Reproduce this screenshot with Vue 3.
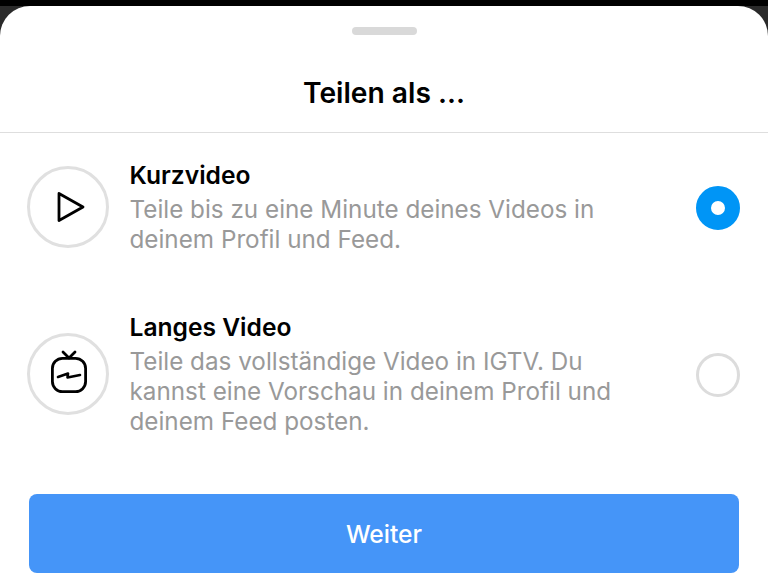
<script setup>
import { ref } from 'vue'

const selected = ref('short')

const options = [
  {
    id: 'short',
    title: 'Kurzvideo',
    lines: ['Teile bis zu eine Minute deines Videos in', 'deinem Profil und Feed.']
  },
  {
    id: 'long',
    title: 'Langes Video',
    lines: ['Teile das vollständige Video in IGTV. Du', 'kannst eine Vorschau in deinem Profil und', 'deinem Feed posten.']
  }
]
</script>

<template>
  <div class="screen">
    <div class="sheet">
      <div class="handle-row"><div class="handle"></div></div>
      <h1 class="title">Teilen als ...</h1>
      <div class="divider"></div>

      <div class="options">
        <div
          v-for="opt in options"
          :key="opt.id"
          class="option"
          :class="'option-' + opt.id"
          @click="selected = opt.id"
        >
          <div class="icon-ring">
            <svg v-if="opt.id === 'short'" class="play" width="28" height="32" viewBox="0 0 28 32">
              <path d="M2 2.5 L26 16 L2 29.5 Z" fill="none" stroke="#000" stroke-width="2.8" stroke-linejoin="round" />
            </svg>
            <svg v-else class="tv" width="40" height="45" viewBox="0 0 40 45">
              <rect x="3.4" y="8.4" width="33.2" height="33.2" rx="10" fill="none" stroke="#000" stroke-width="2.8" />
              <path d="M14 2 L20 8 L26 2" fill="none" stroke="#000" stroke-width="2.8" stroke-linejoin="round" stroke-linecap="round" />
              <path d="M9 27 L19 23.5 L18.5 27.5 L31 25" fill="none" stroke="#000" stroke-width="2.6" stroke-linecap="round" stroke-linejoin="round" />
            </svg>
          </div>
          <div class="text">
            <div class="opt-title">{{ opt.title }}</div>
            <div class="opt-desc">
              <div v-for="line in opt.lines" :key="line">{{ line }}</div>
            </div>
          </div>
          <div class="radio" :class="{ on: selected === opt.id }"></div>
        </div>
      </div>

      <button class="next">Weiter</button>
    </div>
  </div>
</template>

<style>
html, body {
  margin: 0;
  background: #000;
  overflow: hidden;
}
</style>

<style scoped>
.screen {
  width: 768px;
  height: 581px;
  background: #2a2a2a;
  border-top: 6px solid #000;
  box-sizing: border-box;
  overflow: hidden;
  font-family: Inter, "Liberation Sans", sans-serif;
}

.sheet {
  height: 575px;
  background: #fff;
  border-radius: 30px 30px 0 0;
  display: flex;
  flex-direction: column;
}

.handle-row {
  display: flex;
  justify-content: center;
  padding-top: 21px;
}

.handle {
  width: 65px;
  height: 8px;
  border-radius: 4px;
  background: #d9d9d9;
}

.title {
  margin: 0;
  padding-top: 37px;
  height: 42px;
  line-height: 42px;
  text-align: center;
  font-size: 28.2px;
  font-weight: 600;
  color: #000;
}

.divider {
  height: 1px;
  margin-top: 18px;
  background: #dedede;
}

.options {
  display: flex;
  flex-direction: column;
  padding: 0 28px 0 27px;
}

.option {
  display: flex;
  align-items: center;
  cursor: pointer;
}

.option-short {
  margin-top: 27px;
}

.option-long {
  margin-top: 57px;
}

.icon-ring {
  flex: none;
  width: 82px;
  height: 82px;
  margin-bottom: 2px;
  box-sizing: border-box;
  border: 3px solid #e0e0e0;
  border-radius: 50%;
  display: flex;
  align-items: center;
  justify-content: center;
}

.play {
  margin-left: 5px;
}

.tv {
  margin-left: 2px;
  margin-bottom: 3px;
}

.text {
  flex: 1;
  margin-left: 20.5px;
}

.opt-title {
  font-size: 24.6px;
  font-weight: 600;
  line-height: 30px;
  margin-bottom: 5px;
  color: #000;
}

.opt-desc {
  font-size: 24.25px;
  line-height: 30px;
  color: #999;
}

.radio {
  flex: none;
  width: 44px;
  height: 44px;
  box-sizing: border-box;
  border: 3px solid #dcdcdc;
  border-radius: 50%;
}

.radio.on {
  border: 15px solid #0095f6;
  background: #fff;
}

.next {
  display: block;
  margin: 57px 29px 0;
  height: 79px;
  border: none;
  border-radius: 8px;
  background: #4595f8;
  color: #fff;
  font-family: inherit;
  font-size: 24.6px;
  font-weight: 500;
}
</style>
